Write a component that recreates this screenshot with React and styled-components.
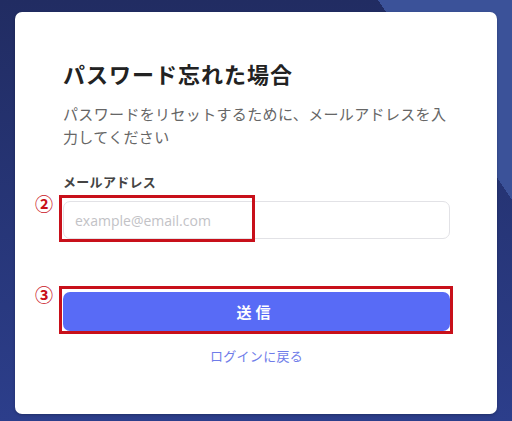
import React from 'react';
import styled, { createGlobalStyle } from 'styled-components';

const GlobalStyle = createGlobalStyle`
  html, body {
    margin: 0;
    padding: 0;
  }
  body {
    font-family: "Noto Sans CJK JP", "Noto Sans", sans-serif;
  }
`;

const Page = styled.div`
  box-sizing: border-box;
  width: 512px;
  height: 421px;
  padding: 12px 15px 7px;
  background-color: #27347a;
  background-image:
    linear-gradient(to top right, transparent 50%, #3b5299 50%),
    linear-gradient(180deg, #212c62 0%, #2c3e8b 100%);
  background-repeat: no-repeat;
  background-size: 134px 200px, 100% 100%;
  background-position: right top, 0 0;
  display: flex;
`;

const Card = styled.div`
  flex: 1;
  background: #fff;
  border-radius: 7px;
  box-shadow: 0 1px 3px rgba(0, 0, 0, 0.25);
  padding: 46px 47px 0 48px;
  display: flex;
  flex-direction: column;
`;

const Title = styled.h1`
  margin: 0;
  font-size: 22px;
  line-height: 31px;
  font-weight: 700;
  letter-spacing: 1px;
  color: #222;
`;

const Lead = styled.p`
  margin: 13px 0 0;
  font-size: 15px;
  line-height: 23px;
  letter-spacing: 0.35px;
  color: #666;
`;

const Field = styled.div`
  margin-top: 25px;
  display: flex;
  flex-direction: column;
  gap: 10px;
`;

const Label = styled.label`
  font-size: 13px;
  line-height: 18px;
  font-weight: 700;
  letter-spacing: 0.3px;
  color: #444;
`;

const Marked = styled.div`
  position: relative;
`;

const Input = styled.input`
  box-sizing: border-box;
  width: 100%;
  height: 38px;
  border: 1px solid #e2e2e6;
  border-radius: 7px;
  padding: 0 11px;
  font-family: "Open Sans", "Liberation Sans", sans-serif;
  font-size: 14px;
  color: #333;
  outline: none;
  &::placeholder {
    color: #c2c2c6;
  }
`;

const Highlight = styled.span`
  position: absolute;
  box-sizing: border-box;
  top: ${(p) => p.$top}px;
  left: -4px;
  width: ${(p) => p.$width};
  height: ${(p) => p.$height}px;
  border: 3px solid #c8101a;
  pointer-events: none;
`;

const Num = styled.span`
  position: absolute;
  top: ${(p) => p.$top}px;
  left: -28px;
  font-size: 18px;
  line-height: 18px;
  font-weight: 700;
  color: #c8101a;
`;

const Submit = styled.button`
  width: 100%;
  height: 39px;
  border: none;
  border-radius: 7px;
  background: #586bf6;
  color: #fff;
  font-family: inherit;
  font-size: 15px;
  font-weight: 700;
  letter-spacing: 4px;
  padding-left: 4px;
`;

const Action = styled.div`
  margin-top: 53px;
`;

const Back = styled.a`
  align-self: center;
  margin-top: 16px;
  font-size: 13px;
  line-height: 18px;
  color: #6f7ce9;
  text-decoration: none;
  letter-spacing: 0.3px;
`;

export default function App() {
  return (
    <>
      <GlobalStyle />
      <Page>
        <Card>
          <Title>パスワード忘れた場合</Title>
          <Lead>パスワードをリセットするために、メールアドレスを入力してください</Lead>
          <Field>
            <Label>メールアドレス</Label>
            <Marked>
              <Input type="email" placeholder="example@email.com" />
              <Highlight $top={-6} $width="196px" $height={47} />
              <Num $top={-7}>②</Num>
            </Marked>
          </Field>
          <Action as={Marked}>
            <Submit>送信</Submit>
            <Highlight $top={-6} $width="calc(100% + 7px)" $height={48} />
            <Num $top={-7}>③</Num>
          </Action>
          <Back href="#">ログインに戻る</Back>
        </Card>
      </Page>
    </>
  );
}
